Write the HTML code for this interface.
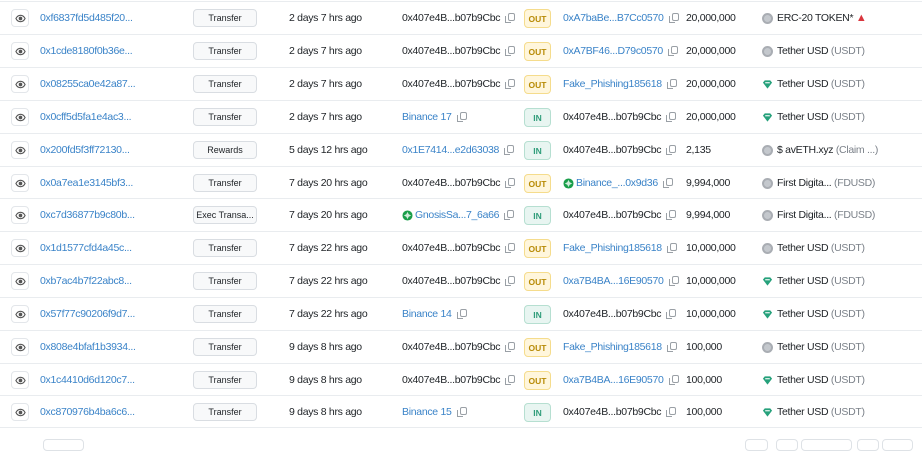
<!DOCTYPE html>
<html><head><meta charset="utf-8"><style>
*{margin:0;padding:0;box-sizing:border-box}
body{width:922px;height:444px;background:#fff;font-family:"Liberation Sans",Arial,sans-serif;font-size:10.5px;letter-spacing:-0.3px;color:#212529;position:relative;overflow:hidden}
.r{position:absolute;left:0;width:922px;height:33px;border-top:1px solid #e9ecef}
.r>*{position:absolute;top:0;height:32px;display:flex;align-items:center;white-space:nowrap}
.eye{left:11px;top:7px!important;width:18px!important;height:18px!important;border:1px solid #e3e6ea;border-radius:4px;justify-content:center}
.h{left:40px;color:#3a83c8}
.m{left:193px;top:7px!important;height:18px!important;width:64px;border:1px solid #d9dde2;background:#f8f9fa;border-radius:4px;justify-content:center;font-size:9px;letter-spacing:0}
.a{left:289px}
.f{left:402px}
.b{left:524px;top:7px!important;height:19px!important;width:27px;border-radius:4px;justify-content:center;font-size:8.5px;font-weight:bold;letter-spacing:0}
.out{background:#fff6dc;border:1px solid #f5dc8c;color:#b78a05}
.in{background:#e8f5f1;border:1px solid #b6dfd1;color:#2f9d7a}
.t{left:563px}
.v{left:686px}
.k{left:762px}
.bl{color:#3a83c8}
.g{color:#7b8189}
.cp{display:inline-block;width:7px;height:8px;border:1px solid #9aa0a6;border-radius:2px;margin-left:8px;position:relative;top:-1px}
.cp:after{content:"";position:absolute;left:-4px;top:2px;width:5px;height:6px;border-left:1px solid #9aa0a6;border-bottom:1px solid #9aa0a6}
.ti{display:inline-block;width:11px;height:11px;margin-right:4px}
.gi{border-radius:50%;background:#c4c8cd;border:2px solid #a9adb3}
.pb{position:absolute;top:439px;height:12px;border:1px solid #dee2e6;border-radius:4px;background:#fff}
</style></head><body>
<svg width="0" height="0" style="position:absolute"><defs>
<symbol id="eye" viewBox="0 0 12 12"><path d="M1 6C2.5 3 4 2.5 6 2.5S9.5 3 11 6C9.5 9 8 9.5 6 9.5S2.5 9 1 6Z" fill="none" stroke="#555" stroke-width="1.2"/><circle cx="6" cy="6" r="2" fill="#555"/></symbol>
<symbol id="usdt" viewBox="0 0 12 12"><path d="M1 4L3 1.5H9L11 4L6 10.5Z" fill="#26a17b"/><rect x="3.5" y="3.5" width="5" height="1.2" fill="#fff"/></symbol>
<symbol id="gn" viewBox="0 0 12 12"><circle cx="6" cy="6" r="5.5" fill="#1a9e4a"/><path d="M6 2L8 6L6 10L4 6Z M2 6L6 4L10 6L6 8Z" fill="#fff" opacity=".8"/></symbol>
</defs></svg>

<div class="r" style="top:1px"><span class="eye"><svg width="11" height="11"><use href="#eye"/></svg></span><span class="h">0xf6837fd5d485f20...</span><span class="m">Transfer</span><span class="a">2 days 7 hrs ago</span><span class="f">0x407e4B...b07b9Cbc<i class="cp"></i></span><span class="b out">OUT</span><span class="t"><span class="bl">0xA7baBe...B7Cc0570</span><i class="cp"></i></span><span class="v">20,000,000</span><span class="k"><i class="ti gi"></i>ERC-20 TOKEN*&nbsp;<span style="color:#d9363e;font-size:11px">&#9650;</span></span></div>
<div class="r" style="top:34px"><span class="eye"><svg width="11" height="11"><use href="#eye"/></svg></span><span class="h">0x1cde8180f0b36e...</span><span class="m">Transfer</span><span class="a">2 days 7 hrs ago</span><span class="f">0x407e4B...b07b9Cbc<i class="cp"></i></span><span class="b out">OUT</span><span class="t"><span class="bl">0xA7BF46...D79c0570</span><i class="cp"></i></span><span class="v">20,000,000</span><span class="k"><i class="ti gi"></i>Tether USD&nbsp;<span class="g">(USDT)</span></span></div>
<div class="r" style="top:67px"><span class="eye"><svg width="11" height="11"><use href="#eye"/></svg></span><span class="h">0x08255ca0e42a87...</span><span class="m">Transfer</span><span class="a">2 days 7 hrs ago</span><span class="f">0x407e4B...b07b9Cbc<i class="cp"></i></span><span class="b out">OUT</span><span class="t"><span class="bl">Fake_Phishing185618</span><i class="cp"></i></span><span class="v">20,000,000</span><span class="k"><svg class="ti"><use href="#usdt"/></svg>Tether USD&nbsp;<span class="g">(USDT)</span></span></div>
<div class="r" style="top:100px"><span class="eye"><svg width="11" height="11"><use href="#eye"/></svg></span><span class="h">0x0cff5d5fa1e4ac3...</span><span class="m">Transfer</span><span class="a">2 days 7 hrs ago</span><span class="f"><span class="bl">Binance 17</span><i class="cp"></i></span><span class="b in">IN</span><span class="t">0x407e4B...b07b9Cbc<i class="cp"></i></span><span class="v">20,000,000</span><span class="k"><svg class="ti"><use href="#usdt"/></svg>Tether USD&nbsp;<span class="g">(USDT)</span></span></div>
<div class="r" style="top:133px"><span class="eye"><svg width="11" height="11"><use href="#eye"/></svg></span><span class="h">0x200fd5f3ff72130...</span><span class="m">Rewards</span><span class="a">5 days 12 hrs ago</span><span class="f"><span class="bl">0x1E7414...e2d63038</span><i class="cp"></i></span><span class="b in">IN</span><span class="t">0x407e4B...b07b9Cbc<i class="cp"></i></span><span class="v">2,135</span><span class="k"><i class="ti gi"></i>$ avETH.xyz&nbsp;<span class="g">(Claim ...)</span></span></div>
<div class="r" style="top:166px"><span class="eye"><svg width="11" height="11"><use href="#eye"/></svg></span><span class="h">0x0a7ea1e3145bf3...</span><span class="m">Transfer</span><span class="a">7 days 20 hrs ago</span><span class="f">0x407e4B...b07b9Cbc<i class="cp"></i></span><span class="b out">OUT</span><span class="t"><svg class="ti" style="margin-right:2px"><use href="#gn"/></svg><span class="bl">Binance_...0x9d36</span><i class="cp"></i></span><span class="v">9,994,000</span><span class="k"><i class="ti gi"></i>First Digita...&nbsp;<span class="g">(FDUSD)</span></span></div>
<div class="r" style="top:198px"><span class="eye"><svg width="11" height="11"><use href="#eye"/></svg></span><span class="h">0xc7d36877b9c80b...</span><span class="m">Exec Transa...</span><span class="a">7 days 20 hrs ago</span><span class="f"><svg class="ti" style="margin-right:2px"><use href="#gn"/></svg><span class="bl">GnosisSa...7_6a66</span><i class="cp"></i></span><span class="b in">IN</span><span class="t">0x407e4B...b07b9Cbc<i class="cp"></i></span><span class="v">9,994,000</span><span class="k"><i class="ti gi"></i>First Digita...&nbsp;<span class="g">(FDUSD)</span></span></div>
<div class="r" style="top:231px"><span class="eye"><svg width="11" height="11"><use href="#eye"/></svg></span><span class="h">0x1d1577cfd4a45c...</span><span class="m">Transfer</span><span class="a">7 days 22 hrs ago</span><span class="f">0x407e4B...b07b9Cbc<i class="cp"></i></span><span class="b out">OUT</span><span class="t"><span class="bl">Fake_Phishing185618</span><i class="cp"></i></span><span class="v">10,000,000</span><span class="k"><i class="ti gi"></i>Tether USD&nbsp;<span class="g">(USDT)</span></span></div>
<div class="r" style="top:264px"><span class="eye"><svg width="11" height="11"><use href="#eye"/></svg></span><span class="h">0xb7ac4b7f22abc8...</span><span class="m">Transfer</span><span class="a">7 days 22 hrs ago</span><span class="f">0x407e4B...b07b9Cbc<i class="cp"></i></span><span class="b out">OUT</span><span class="t"><span class="bl">0xa7B4BA...16E90570</span><i class="cp"></i></span><span class="v">10,000,000</span><span class="k"><svg class="ti"><use href="#usdt"/></svg>Tether USD&nbsp;<span class="g">(USDT)</span></span></div>
<div class="r" style="top:297px"><span class="eye"><svg width="11" height="11"><use href="#eye"/></svg></span><span class="h">0x57f77c90206f9d7...</span><span class="m">Transfer</span><span class="a">7 days 22 hrs ago</span><span class="f"><span class="bl">Binance 14</span><i class="cp"></i></span><span class="b in">IN</span><span class="t">0x407e4B...b07b9Cbc<i class="cp"></i></span><span class="v">10,000,000</span><span class="k"><svg class="ti"><use href="#usdt"/></svg>Tether USD&nbsp;<span class="g">(USDT)</span></span></div>
<div class="r" style="top:330px"><span class="eye"><svg width="11" height="11"><use href="#eye"/></svg></span><span class="h">0x808e4bfaf1b3934...</span><span class="m">Transfer</span><span class="a">9 days 8 hrs ago</span><span class="f">0x407e4B...b07b9Cbc<i class="cp"></i></span><span class="b out">OUT</span><span class="t"><span class="bl">Fake_Phishing185618</span><i class="cp"></i></span><span class="v">100,000</span><span class="k"><i class="ti gi"></i>Tether USD&nbsp;<span class="g">(USDT)</span></span></div>
<div class="r" style="top:363px"><span class="eye"><svg width="11" height="11"><use href="#eye"/></svg></span><span class="h">0x1c4410d6d120c7...</span><span class="m">Transfer</span><span class="a">9 days 8 hrs ago</span><span class="f">0x407e4B...b07b9Cbc<i class="cp"></i></span><span class="b out">OUT</span><span class="t"><span class="bl">0xa7B4BA...16E90570</span><i class="cp"></i></span><span class="v">100,000</span><span class="k"><svg class="ti"><use href="#usdt"/></svg>Tether USD&nbsp;<span class="g">(USDT)</span></span></div>
<div class="r" style="top:395px;border-bottom:1px solid #e9ecef"><span class="eye"><svg width="11" height="11"><use href="#eye"/></svg></span><span class="h">0xc870976b4ba6c6...</span><span class="m">Transfer</span><span class="a">9 days 8 hrs ago</span><span class="f"><span class="bl">Binance 15</span><i class="cp"></i></span><span class="b in">IN</span><span class="t">0x407e4B...b07b9Cbc<i class="cp"></i></span><span class="v">100,000</span><span class="k"><svg class="ti"><use href="#usdt"/></svg>Tether USD&nbsp;<span class="g">(USDT)</span></span></div>

<div class="pb" style="left:43px;width:41px"></div>
<div class="pb" style="left:745px;width:23px"></div>
<div class="pb" style="left:776px;width:22px"></div>
<div class="pb" style="left:801px;width:51px"></div>
<div class="pb" style="left:857px;width:22px"></div>
<div class="pb" style="left:882px;width:31px"></div>
</body></html>
